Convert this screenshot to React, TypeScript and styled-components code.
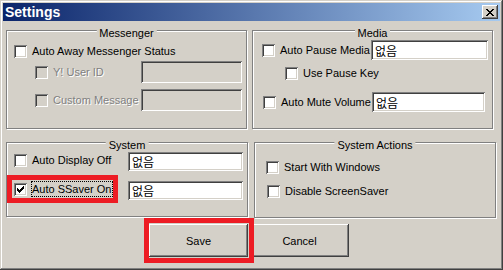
import styled, { createGlobalStyle, css } from 'styled-components'

const GlobalStyle = createGlobalStyle`
  html, body {
    margin: 0;
    padding: 0;
    background: #d4d0c8;
  }
  body {
    font-family: "Liberation Sans", Arial, sans-serif;
    font-size: 11px;
  }
  * {
    box-sizing: border-box;
  }
`

const raised = css`
  box-shadow: inset -1px -1px #404040, inset 1px 1px #ffffff, inset -2px -2px #808080, inset 2px 2px #d4d0c8;
`

const sunken = css`
  box-shadow: inset 1px 1px #808080, inset -1px -1px #ffffff, inset 2px 2px #404040, inset -2px -2px #d4d0c8;
`

const redMark = css`
  &::after {
    content: '';
    position: absolute;
    border: 5px solid #ed1c24;
    pointer-events: none;
    z-index: 1;
  }
`

const Window = styled.div`
  width: 503px;
  height: 270px;
  padding: 3px;
  background: #d4d0c8;
  box-shadow: inset -1px -1px #404040, inset 1px 1px #d4d0c8, inset -2px -2px #808080, inset 2px 2px #ffffff;
  display: flex;
  flex-direction: column;
  color: #000;
`

const TitleBar = styled.div`
  height: 18px;
  display: flex;
  align-items: center;
  justify-content: space-between;
  padding: 0 2px;
  background: linear-gradient(to right, #0a246a, #a6caf0);
`

const Title = styled.span`
  color: #fff;
  font-weight: bold;
  font-size: 14px;
  line-height: 18px;
`

const CloseButton = styled.button`
  width: 16px;
  height: 14px;
  padding: 0;
  border: 0;
  background: #d4d0c8;
  ${raised}
  display: flex;
  align-items: center;
  justify-content: center;
`

const Body = styled.div`
  display: flex;
  flex-direction: column;
  padding-left: 3px;
`

const GroupRow = styled.div<{ $top: number; $gap: number }>`
  display: flex;
  align-items: flex-start;
  gap: ${p => p.$gap}px;
  margin-top: ${p => p.$top}px;
`

const Group = styled.div<{ $w: number; $h: number; $pr: number }>`
  position: relative;
  width: ${p => p.$w}px;
  height: ${p => p.$h}px;
  padding-right: ${p => p.$pr}px;
  border: 1px solid #808080;
  box-shadow: inset 1px 1px #ffffff, 1px 1px #ffffff;
  display: flex;
  flex-direction: column;
`

const Caption = styled.span`
  position: absolute;
  top: -4px;
  left: 50%;
  transform: translateX(-50%);
  padding: 0 3px;
  background: #d4d0c8;
  line-height: 13px;
  white-space: nowrap;
`

const Row = styled.div<{ $top: number; $h: number; $pl: number; $align?: string }>`
  display: flex;
  align-items: ${p => p.$align ?? 'center'};
  height: ${p => p.$h}px;
  margin-top: ${p => p.$top}px;
  padding-left: ${p => p.$pl}px;
`

const CheckItem = styled.label<{ $marked?: boolean }>`
  position: relative;
  display: flex;
  align-items: center;
  gap: 4px;
  height: 16px;
  ${p =>
    p.$marked &&
    css`
      ${redMark}
      &::after {
        top: -6px;
        bottom: -6px;
        left: -7px;
        right: -5px;
      }
    `}
`

const Box = styled.span<{ $disabled?: boolean }>`
  width: 13px;
  height: 13px;
  flex: none;
  background: ${p => (p.$disabled ? '#d4d0c8' : '#ffffff')};
  ${sunken}
  display: flex;
  align-items: center;
  justify-content: center;
`

const Label = styled.span<{ $disabled?: boolean; $focus?: boolean }>`
  border: 1px dotted ${p => (p.$focus ? '#000' : 'transparent')};
  line-height: 14px;
  white-space: nowrap;
  color: ${p => (p.$disabled ? '#808080' : '#000')};
  text-shadow: ${p => (p.$disabled ? '1px 1px #ffffff' : 'none')};
`

const Field = styled.div<{ $w: number; $h: number; $disabled?: boolean }>`
  width: ${p => p.$w}px;
  height: ${p => p.$h}px;
  flex: none;
  margin-left: auto;
  padding-left: 4px;
  background: ${p => (p.$disabled ? '#d4d0c8' : '#ffffff')};
  ${sunken}
  display: flex;
  align-items: center;
  font-family: "Noto Sans CJK KR", sans-serif;
  font-size: 12px;
`

const Footer = styled.div`
  display: flex;
  gap: 2px;
  margin-top: 6px;
  padding-left: 143px;
`

const Button = styled.button<{ $marked?: boolean }>`
  position: relative;
  width: 99px;
  height: 33px;
  padding: 0;
  border: 0;
  background: #d4d0c8;
  ${raised}
  font-family: "Liberation Sans", Arial, sans-serif;
  font-size: 11px;
  color: #000;
  ${p =>
    p.$marked &&
    css`
      ${redMark}
      &::after {
        top: -6px;
        bottom: -6px;
        left: -5px;
        right: -6px;
      }
    `}
`

function CheckMark() {
  return (
    <svg width="7" height="7" viewBox="0 0 7 7">
      <path
        fill="#000"
        d="M6 0h1v1h-1z M5 1h2v1h-2z M0 2h1v1h-1z M4 2h3v1h-3z M0 3h2v1h-2z M3 3h3v1h-3z M0 4h5v1h-5z M1 5h3v1h-3z M2 6h1v1h-1z"
      />
    </svg>
  )
}

function CloseGlyph() {
  return (
    <svg width="8" height="7" viewBox="0 0 8 7">
      <path
        fill="#000"
        d="M0 0h2v1h-2z M6 0h2v1h-2z M1 1h2v1h-2z M5 1h2v1h-2z M2 2h4v1h-4z M3 3h2v1h-2z M2 4h4v1h-4z M1 5h2v1h-2z M5 5h2v1h-2z M0 6h2v1h-2z M6 6h2v1h-2z"
      />
    </svg>
  )
}

type CheckProps = {
  label: string
  checked?: boolean
  disabled?: boolean
  focus?: boolean
  marked?: boolean
}

function Check({ label, checked, disabled, focus, marked }: CheckProps) {
  return (
    <CheckItem $marked={marked}>
      <Box $disabled={disabled}>{checked && <CheckMark />}</Box>
      <Label $disabled={disabled} $focus={focus}>
        {label}
      </Label>
    </CheckItem>
  )
}

export default function App() {
  return (
    <>
      <GlobalStyle />
      <Window>
        <TitleBar>
          <Title>Settings</Title>
          <CloseButton aria-label="Close">
            <CloseGlyph />
          </CloseButton>
        </TitleBar>

        <Body>
          <GroupRow $top={9} $gap={5}>
            <Group $w={241} $h={99} $pr={4}>
              <Caption>Messenger</Caption>
              <Row $top={12} $h={16} $pl={7}>
                <Check label="Auto Away Messenger Status" />
              </Row>
              <Row $top={2} $h={22} $pl={28}>
                <Check label="Y! User ID" disabled />
                <Field $w={101} $h={22} $disabled />
              </Row>
              <Row $top={6} $h={22} $pl={28}>
                <Check label="Custom Message" disabled />
                <Field $w={101} $h={22} $disabled />
              </Row>
            </Group>

            <Group $w={241} $h={99} $pr={7}>
              <Caption>Media</Caption>
              <Row $top={9} $h={20} $pl={9}>
                <Check label="Auto Pause Media" />
                <Field $w={117} $h={20}>없음</Field>
              </Row>
              <Row $top={5} $h={16} $pl={32}>
                <Check label="Use Pause Key" />
              </Row>
              <Row $top={11} $h={20} $pl={10}>
                <Check label="Auto Mute Volume" />
                <Field $w={113} $h={20}>없음</Field>
              </Row>
            </Group>
          </GroupRow>

          <GroupRow $top={13} $gap={6}>
            <Group $w={242} $h={75} $pr={4}>
              <Caption>System</Caption>
              <Row $top={9} $h={19} $pl={7} $align="flex-start">
                <Check label="Auto Display Off" />
                <Field $w={115} $h={19}>없음</Field>
              </Row>
              <Row $top={10} $h={19} $pl={7} $align="flex-start">
                <Check label="Auto SSaver On" checked focus marked />
                <Field $w={115} $h={19}>없음</Field>
              </Row>
            </Group>

            <Group $w={242} $h={76} $pr={4}>
              <Caption>System Actions</Caption>
              <Row $top={16} $h={16} $pl={11}>
                <Check label="Start With Windows" />
              </Row>
              <Row $top={8} $h={16} $pl={12}>
                <Check label="Disable ScreenSaver" />
              </Row>
            </Group>
          </GroupRow>

          <Footer>
            <Button $marked>Save</Button>
            <Button>Cancel</Button>
          </Footer>
        </Body>
      </Window>
    </>
  )
}
